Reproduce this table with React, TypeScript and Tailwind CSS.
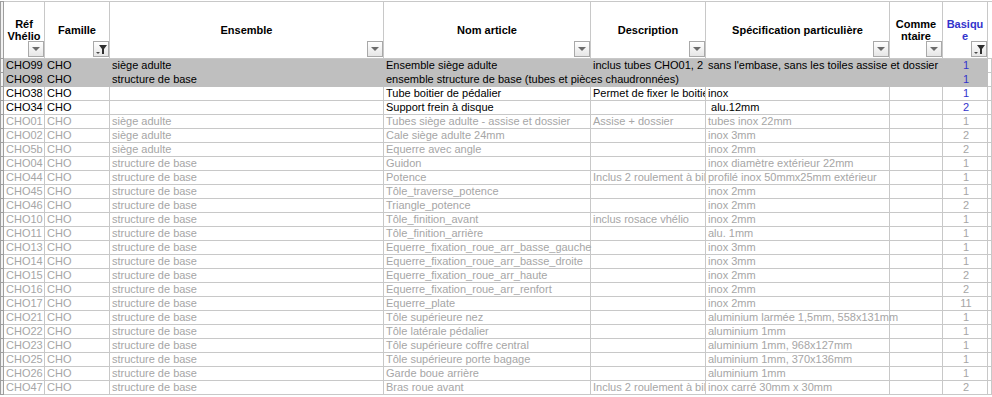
import React from "react";

type Row = {
  ref: string;
  ens?: string;
  nom?: string;
  desc?: string;
  spec?: string;
  bas: string;
  hi?: boolean;
  dim?: boolean;
  nomSpan?: boolean;
  specSpan?: boolean;
};

const rows: Row[] = [
  { ref: "CHO99", ens: "siège adulte", nom: "Ensemble siège adulte", desc: "inclus tubes CHO01, 2 cales", spec: "sans l'embase, sans les toiles assise et dossier", bas: "1", hi: true, specSpan: true },
  { ref: "CHO98", ens: "structure de base", nom: "ensemble structure de base (tubes et pièces chaudronnées)", bas: "1", hi: true, nomSpan: true },
  { ref: "CHO38", nom: "Tube boitier de pédalier", desc: "Permet de fixer le boitier de pédalier", spec: "inox", bas: "1" },
  { ref: "CHO34", nom: "Support frein à disque", spec: " alu.12mm", bas: "2" },
  { ref: "CHO01", ens: "siège adulte", nom: "Tubes siège adulte - assise et dossier", desc: "Assise + dossier", spec: "tubes inox 22mm", bas: "1", dim: true },
  { ref: "CHO02", ens: "siège adulte", nom: "Cale siège adulte 24mm", spec: "inox 3mm", bas: "2", dim: true },
  { ref: "CHO5b", ens: "siège adulte", nom: "Equerre avec angle", spec: "inox 2mm", bas: "2", dim: true },
  { ref: "CHO04", ens: "structure de base", nom: "Guidon", spec: "inox diamètre extérieur 22mm", bas: "1", dim: true },
  { ref: "CHO44", ens: "structure de base", nom: "Potence", desc: "Inclus 2 roulement à billes", spec: "profilé inox 50mmx25mm extérieur", bas: "1", dim: true },
  { ref: "CHO45", ens: "structure de base", nom: "Tôle_traverse_potence", spec: "inox 2mm", bas: "1", dim: true },
  { ref: "CHO46", ens: "structure de base", nom: "Triangle_potence", spec: "inox 2mm", bas: "2", dim: true },
  { ref: "CHO10", ens: "structure de base", nom: "Tôle_finition_avant", desc: "inclus rosace vhélio", spec: "inox 2mm", bas: "1", dim: true },
  { ref: "CHO11", ens: "structure de base", nom: "Tôle_finition_arrière", spec: "alu. 1mm", bas: "1", dim: true },
  { ref: "CHO13", ens: "structure de base", nom: "Equerre_fixation_roue_arr_basse_gauche", spec: "inox 3mm", bas: "1", dim: true },
  { ref: "CHO14", ens: "structure de base", nom: "Equerre_fixation_roue_arr_basse_droite", spec: "inox 3mm", bas: "1", dim: true },
  { ref: "CHO15", ens: "structure de base", nom: "Equerre_fixation_roue_arr_haute", spec: "inox 2mm", bas: "2", dim: true },
  { ref: "CHO16", ens: "structure de base", nom: "Equerre_fixation_roue_arr_renfort", spec: "inox 2mm", bas: "2", dim: true },
  { ref: "CHO17", ens: "structure de base", nom: "Equerre_plate", spec: "inox 2mm", bas: "11", dim: true },
  { ref: "CHO21", ens: "structure de base", nom: "Tôle supérieure nez", spec: "aluminium larmée 1,5mm, 558x131mm", bas: "1", dim: true },
  { ref: "CHO22", ens: "structure de base", nom: "Tôle latérale pédalier", spec: "aluminium 1mm", bas: "1", dim: true },
  { ref: "CHO23", ens: "structure de base", nom: "Tôle supérieure coffre central", spec: "aluminium 1mm, 968x127mm", bas: "1", dim: true },
  { ref: "CHO25", ens: "structure de base", nom: "Tôle supérieure porte bagage", spec: "aluminium 1mm, 370x136mm", bas: "1", dim: true },
  { ref: "CHO26", ens: "structure de base", nom: "Garde boue arrière", spec: "aluminium 1mm", bas: "1", dim: true },
  { ref: "CHO47", ens: "structure de base", nom: "Bras roue avant", desc: "Inclus 2 roulement à billes", spec: "inox carré 30mm x 30mm", bas: "2", dim: true },
];

const headers: { lines: string[]; active?: boolean; blue?: boolean }[] = [
  { lines: ["Réf", "Vhélio"] },
  { lines: ["Famille"], active: true },
  { lines: ["Ensemble"] },
  { lines: ["Nom article"] },
  { lines: ["Description"] },
  { lines: ["Spécification particulière"] },
  { lines: ["Comme", "ntaire"] },
  { lines: ["Basiqu", "e"], active: true, blue: true },
];

const FilterBtn = ({ active }: { active?: boolean }) => (
  <div className="absolute right-0 bottom-px w-[16px] h-[16px] border border-[#a9a9a9] bg-gradient-to-b from-white to-[#e6e6e6] flex items-center justify-center">
    {active ? (
      <svg width="14" height="14" viewBox="0 0 14 14">
        <polygon points="5,3 13,3 10,7 10,12 8,12 8,7" fill="#2f2f2f" />
        <polygon points="2,10 6,10 4,12" fill="#4a4a4a" />
      </svg>
    ) : (
      <svg width="8" height="5" viewBox="0 0 8 5">
        <polygon points="0,0 8,0 4,4" fill="#6b6b6b" />
      </svg>
    )}
  </div>
);

const line = "border-r border-b border-[#c8c8c8]";
const cell = "h-[14px] whitespace-nowrap pl-[2px] leading-[13px]";

const DataRow = ({ r }: { r: Row }) => {
  const tone = r.dim ? "text-[#a6a6a6]" : "text-black";
  const bdr = r.hi ? "border-r border-b border-transparent bg-[#bfbfbf]" : line;
  const c = `${cell} ${bdr} ${tone}`;
  // text spills into the next cell only when that cell is empty, as in the sheet
  const clip = "overflow-hidden";
  return (
    <>
      <div className="h-[14px] border-l border-r border-b border-[#9e9e9e] bg-[#f2f2f2]" />
      <div className={`${c} ${clip}`}>{r.ref}</div>
      <div className={`${c} ${clip}`}>CHO</div>
      <div className={`${c} ${clip}`}>{r.ens}</div>
      {r.nomSpan ? (
        <div className={`${c} ${clip} col-span-2`}>{r.nom}</div>
      ) : (
        <>
          <div className={`${c} ${r.desc ? clip : ""}`}>{r.nom}</div>
          <div className={`${c} ${clip}`}>{r.desc}</div>
        </>
      )}
      {r.specSpan ? (
        <div className={`${c} ${clip} col-span-2 whitespace-pre`}>{r.spec}</div>
      ) : (
        <>
          <div className={`${c} whitespace-pre`}>{r.spec}</div>
          <div className={`${c} ${clip}`} />
        </>
      )}
      <div className={`${cell} ${bdr} ${clip} text-center pl-0 ${r.dim ? "text-[#a6a6a6]" : "text-[#3333cc]"}`}>{r.bas}</div>
      <div className={`h-[14px] ${line}`} />
    </>
  );
};

export default function App() {
  return (
    <div className="w-[992px] h-[397px] overflow-hidden bg-white pt-px font-['Liberation_Sans',Arial,sans-serif] text-[11px]">
      <div className="grid grid-cols-[4px_41px_65px_274px_207px_115px_184px_53px_45px_1fr]">
        <div className="h-[58px] border-t border-l border-r border-b border-[#9e9e9e] bg-[#f2f2f2]" />
        {headers.map((h, i) => (
          <div key={i} className={`relative h-[58px] border-t ${line}`}>
            <div
              className={`absolute inset-0 flex flex-col items-center justify-center font-bold leading-[12.5px] text-center [clip-path:inset(0_0_17px_0)] ${
                h.blue ? "text-[#3333cc]" : "text-black"
              }`}
            >
              {h.lines.map((l) => (
                <span key={l}>{l}</span>
              ))}
            </div>
            <FilterBtn active={h.active} />
          </div>
        ))}
        <div className="h-[58px] border-t border-b border-[#c8c8c8]" />
        {rows.map((r) => (
          <DataRow key={r.ref} r={r} />
        ))}
      </div>
    </div>
  );
}
